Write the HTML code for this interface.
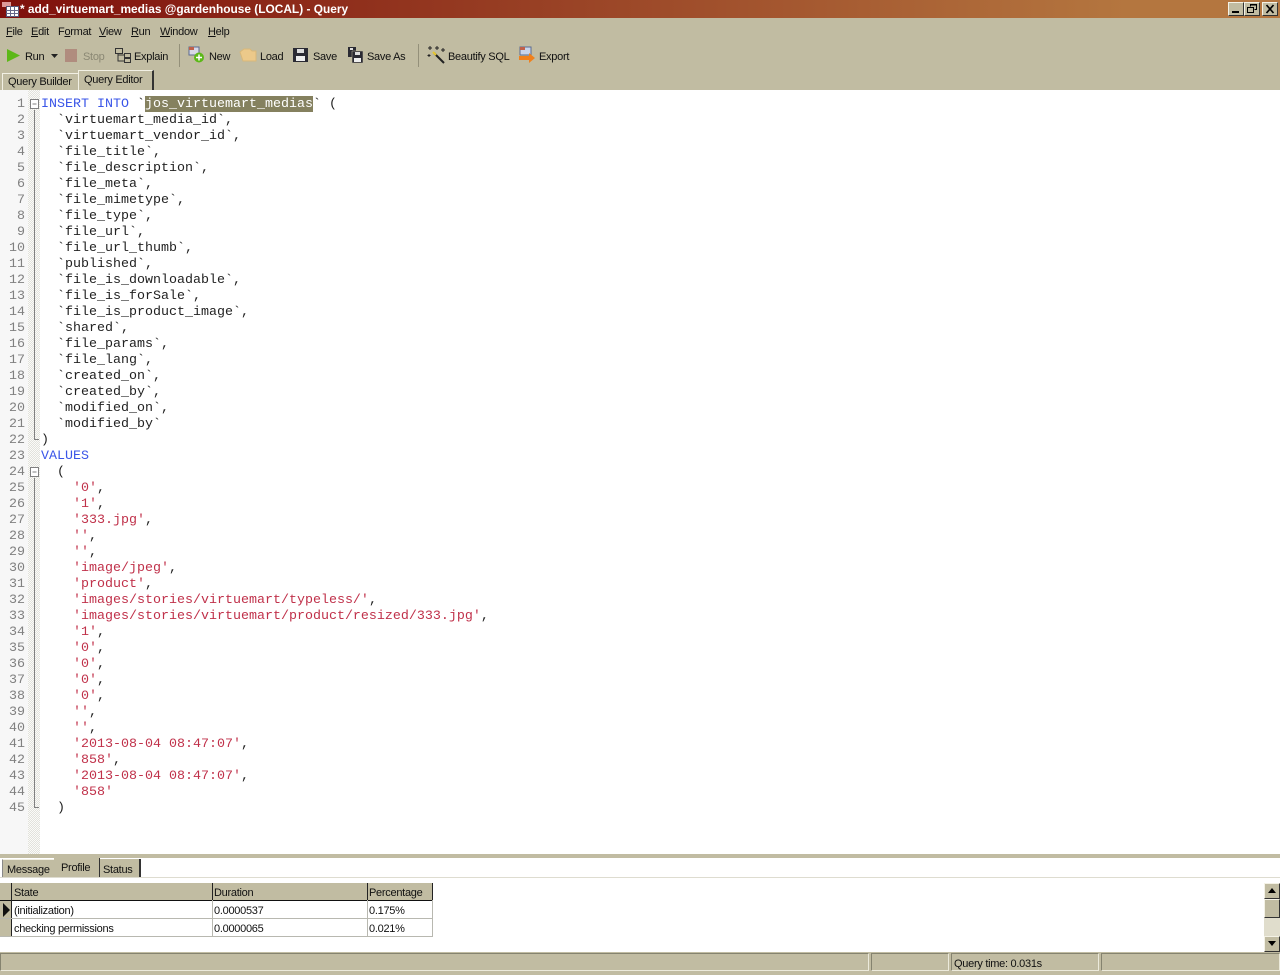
<!DOCTYPE html>
<html><head><meta charset="utf-8"><style>
html,body{margin:0;padding:0;width:1280px;height:975px;overflow:hidden;background:#c1bca2}
.a{position:absolute}
.t{position:absolute;font:11px/14px "Liberation Sans",sans-serif;letter-spacing:-.28px;color:#111;white-space:nowrap}
.c{position:absolute;left:0;white-space:pre;font:13.33px/16px "Liberation Mono",monospace;color:#222}
.n{position:absolute;width:25px;text-align:right;font:13.33px/16px "Liberation Mono",monospace;color:#808080;left:0}
.k{color:#3a55e8}.r{color:#c0314a}
.btn{position:absolute;top:2px;width:16px;height:14px;background:#c1bca2;border:1px solid;border-color:#f4f2e6 #333 #333 #f4f2e6;box-sizing:border-box}
.cell{position:absolute;font:11px/17px "Liberation Sans",sans-serif;letter-spacing:-.28px;color:#111;white-space:nowrap;box-sizing:border-box;padding-left:2px}
</style></head><body>
<div class="a" style="left:0;top:0;width:1280px;height:18px;background:linear-gradient(90deg,#7f0f0c,#b4763f 88%,#b4763f)"></div>
<svg class="a" style="left:2px;top:2px" width="17" height="15"><rect x="0" y="0" width="9" height="5" fill="#d99"/><rect x="4.500" y="4.500" width="12" height="10" fill="#fff" stroke="#557" /><path d="M4 8.500H17M4 11.500H17M8.500 4V15M12.500 4V15" stroke="#668" fill="none"/></svg>
<div class="t" style="left:20px;top:2px;color:#fff;font-weight:bold;font-size:11.9px;letter-spacing:0">* add_virtuemart_medias @gardenhouse (LOCAL) - Query</div>
<div class="btn" style="left:1228px"><div class="a" style="left:3px;top:8px;width:7px;height:2px;background:#000"></div></div>
<div class="btn" style="left:1244px"><svg class="a" style="left:2px;top:1px" width="11" height="10"><path d="M3.500 2.500V.5H9.500V5.500H7.500M.5 3.500H6.500V8.500H.5Z" fill="none" stroke="#000"/><path d="M3 1H10M0 3.500H7" stroke="#000"/></svg></div>
<div class="btn" style="left:1262px"><svg class="a" style="left:2px;top:1px" width="11" height="10"><path d="M1.500 1L8.500 9M8.500 1L1.500 9" stroke="#000" stroke-width="1.700"/></svg></div>

<div class="t" style="left:6px;top:25px"><u>F</u>ile</div>
<div class="t" style="left:31px;top:25px"><u>E</u>dit</div>
<div class="t" style="left:58px;top:25px">F<u>o</u>rmat</div>
<div class="t" style="left:99px;top:25px"><u>V</u>iew</div>
<div class="t" style="left:131px;top:25px"><u>R</u>un</div>
<div class="t" style="left:160px;top:25px"><u>W</u>indow</div>
<div class="t" style="left:208px;top:25px"><u>H</u>elp</div>

<svg class="a" style="left:0;top:40px" width="600" height="32">
<path d="M7 9L20 15.500L7 22Z" fill="#5cb818"/>
<path d="M51 14H58L54.500 18Z" fill="#222"/>
<rect x="65" y="9" width="12" height="13" fill="#b08c7e"/>
<g fill="none" stroke="#333"><rect x="115.500" y="8.500" width="7" height="5"/><rect x="124.500" y="13.500" width="6" height="4"/><rect x="124.500" y="18.500" width="6" height="4"/><path d="M118 14V21H124M118 15H124"/></g>
<line x1="179.500" y1="4" x2="179.500" y2="27" stroke="#94907a"/>
<rect x="189" y="7" width="10" height="8" fill="#d8d8e8" stroke="#5a6a90"/><rect x="189" y="7" width="5" height="3" fill="#c0604a"/>
<circle cx="199" cy="17.500" r="5" fill="#5cb818"/><path d="M199 14.500V20.500M196 17.500H202" stroke="#fff" stroke-width="1.500"/>
<path d="M240 12L244 9H250L252 11H256V21H243Z" fill="#ecc98a" stroke="#d8b87a"/>
<path d="M293 8H308V22H293Z" fill="#2a2a33"/><rect x="297" y="9" width="7" height="4" fill="#ddd"/><rect x="296" y="16" width="9" height="5" fill="#eee"/>
<path d="M348 7H356V17H348Z" fill="#2a2a33"/><rect x="350" y="8" width="3" height="2" fill="#ddd"/>
<path d="M352 11H363V23H352Z" fill="#2a2a33" stroke="#c1bca2" stroke-width=".5"/><rect x="355" y="12" width="5" height="3" fill="#ddd"/><rect x="354" y="18" width="7" height="4" fill="#eee"/>
<line x1="418.500" y1="4" x2="418.500" y2="27" stroke="#94907a"/>
<path d="M434 13L444 23" stroke="#222" stroke-width="2"/><path d="M433 12L436 15" stroke="#e8c830" stroke-width="2"/>
<path d="M430 6V10M428 8H432M437 6V10M435 8H439M443 8V12M441 10H445M429 14V17M427.500 15.500H430.500" stroke="#222"/>
<rect x="520" y="7" width="11" height="8" fill="#c8d4ea" stroke="#5a6a90"/><rect x="520" y="7" width="5" height="3" fill="#c0604a"/>
<path d="M519 16H529V13L535 18L529 23V20H519Z" fill="#f0801c"/>
</svg>
<div class="t" style="left:25px;top:50px">Run</div>
<div class="t" style="left:83px;top:50px;color:#8b8874">Stop</div>
<div class="t" style="left:134px;top:50px">Explain</div>
<div class="t" style="left:209px;top:50px">New</div>
<div class="t" style="left:260px;top:50px">Load</div>
<div class="t" style="left:313px;top:50px">Save</div>
<div class="t" style="left:367px;top:50px">Save As</div>
<div class="t" style="left:448px;top:50px">Beautify SQL</div>
<div class="t" style="left:539px;top:50px">Export</div>

<!-- query tabs -->
<div class="a" style="left:2px;top:73px;width:76px;height:17px;border-top:1px solid #f2f0e4;border-left:1px solid #f2f0e4;box-sizing:border-box"></div>
<div class="a" style="left:78px;top:70px;width:76px;height:20px;background:#c1bca2;border:1px solid #f2f0e4;border-right:2px solid #333;border-bottom:0;box-sizing:border-box"></div>
<div class="t" style="left:8px;top:75px">Query Builder</div>
<div class="t" style="left:84px;top:73px">Query Editor</div>

<!-- editor -->
<div class="a" style="left:0;top:90px;width:1280px;height:764px;background:#fff;overflow:hidden">
<div class="a" style="left:0;top:0;width:28px;height:764px;background:#f7f7f7"></div>
<div class="a" style="left:28px;top:0;width:12px;height:764px;background:repeating-conic-gradient(#e2e2dc 0 25%,#fbfbf8 0 50%) 0 0/2px 2px"></div>
<div class="a" style="left:145px;top:6px;width:168px;height:16px;background:#85815f"></div>
<svg class="a" style="left:28px;top:0" width="12" height="730" fill="none" stroke="#808080">
<path d="M6.500 20V349.500H11"/><path d="M6.500 388V717.500H11"/>
<rect x="2.500" y="9.500" width="8" height="9" fill="#fff"/><path d="M4.500 14H8.500"/>
<rect x="2.500" y="377.500" width="8" height="9" fill="#fff"/><path d="M4.500 382H8.500"/>
</svg>
<div class="n" style="top:7px">1</div><div class="n" style="top:23px">2</div><div class="n" style="top:39px">3</div><div class="n" style="top:55px">4</div><div class="n" style="top:71px">5</div><div class="n" style="top:87px">6</div><div class="n" style="top:103px">7</div><div class="n" style="top:119px">8</div><div class="n" style="top:135px">9</div><div class="n" style="top:151px">10</div><div class="n" style="top:167px">11</div><div class="n" style="top:183px">12</div><div class="n" style="top:199px">13</div><div class="n" style="top:215px">14</div><div class="n" style="top:231px">15</div><div class="n" style="top:247px">16</div><div class="n" style="top:263px">17</div><div class="n" style="top:279px">18</div><div class="n" style="top:295px">19</div><div class="n" style="top:311px">20</div><div class="n" style="top:327px">21</div><div class="n" style="top:343px">22</div><div class="n" style="top:359px">23</div><div class="n" style="top:375px">24</div><div class="n" style="top:391px">25</div><div class="n" style="top:407px">26</div><div class="n" style="top:423px">27</div><div class="n" style="top:439px">28</div><div class="n" style="top:455px">29</div><div class="n" style="top:471px">30</div><div class="n" style="top:487px">31</div><div class="n" style="top:503px">32</div><div class="n" style="top:519px">33</div><div class="n" style="top:535px">34</div><div class="n" style="top:551px">35</div><div class="n" style="top:567px">36</div><div class="n" style="top:583px">37</div><div class="n" style="top:599px">38</div><div class="n" style="top:615px">39</div><div class="n" style="top:631px">40</div><div class="n" style="top:647px">41</div><div class="n" style="top:663px">42</div><div class="n" style="top:679px">43</div><div class="n" style="top:695px">44</div><div class="n" style="top:711px">45</div>
<div class="a" style="left:41px;top:7px">
<div class="c" style="top:0"><span class="k">INSERT INTO</span> `<span style="color:#fff">jos_virtuemart_medias</span>` (</div>
<div class="c" style="top:16px">  `virtuemart_media_id`,</div>
<div class="c" style="top:32px">  `virtuemart_vendor_id`,</div>
<div class="c" style="top:48px">  `file_title`,</div>
<div class="c" style="top:64px">  `file_description`,</div>
<div class="c" style="top:80px">  `file_meta`,</div>
<div class="c" style="top:96px">  `file_mimetype`,</div>
<div class="c" style="top:112px">  `file_type`,</div>
<div class="c" style="top:128px">  `file_url`,</div>
<div class="c" style="top:144px">  `file_url_thumb`,</div>
<div class="c" style="top:160px">  `published`,</div>
<div class="c" style="top:176px">  `file_is_downloadable`,</div>
<div class="c" style="top:192px">  `file_is_forSale`,</div>
<div class="c" style="top:208px">  `file_is_product_image`,</div>
<div class="c" style="top:224px">  `shared`,</div>
<div class="c" style="top:240px">  `file_params`,</div>
<div class="c" style="top:256px">  `file_lang`,</div>
<div class="c" style="top:272px">  `created_on`,</div>
<div class="c" style="top:288px">  `created_by`,</div>
<div class="c" style="top:304px">  `modified_on`,</div>
<div class="c" style="top:320px">  `modified_by`</div>
<div class="c" style="top:336px">)</div>
<div class="c k" style="top:352px;color:#3a55e8">VALUES</div>
<div class="c" style="top:368px">  (</div>
<div class="c" style="top:384px">    <span class="r">'0'</span>,</div>
<div class="c" style="top:400px">    <span class="r">'1'</span>,</div>
<div class="c" style="top:416px">    <span class="r">'333.jpg'</span>,</div>
<div class="c" style="top:432px">    <span class="r">''</span>,</div>
<div class="c" style="top:448px">    <span class="r">''</span>,</div>
<div class="c" style="top:464px">    <span class="r">'image/jpeg'</span>,</div>
<div class="c" style="top:480px">    <span class="r">'product'</span>,</div>
<div class="c" style="top:496px">    <span class="r">'images/stories/virtuemart/typeless/'</span>,</div>
<div class="c" style="top:512px">    <span class="r">'images/stories/virtuemart/product/resized/333.jpg'</span>,</div>
<div class="c" style="top:528px">    <span class="r">'1'</span>,</div>
<div class="c" style="top:544px">    <span class="r">'0'</span>,</div>
<div class="c" style="top:560px">    <span class="r">'0'</span>,</div>
<div class="c" style="top:576px">    <span class="r">'0'</span>,</div>
<div class="c" style="top:592px">    <span class="r">'0'</span>,</div>
<div class="c" style="top:608px">    <span class="r">''</span>,</div>
<div class="c" style="top:624px">    <span class="r">''</span>,</div>
<div class="c" style="top:640px">    <span class="r">'2013-08-04 08:47:07'</span>,</div>
<div class="c" style="top:656px">    <span class="r">'858'</span>,</div>
<div class="c" style="top:672px">    <span class="r">'2013-08-04 08:47:07'</span>,</div>
<div class="c" style="top:688px">    <span class="r">'858'</span></div>
<div class="c" style="top:704px">  )</div>
</div>
</div>

<!-- lower panel -->
<div class="a" style="left:0;top:854px;width:1280px;height:4px;background:#c1bca2"></div>
<div class="a" style="left:0;top:858px;width:1280px;height:94px;background:#fff"></div>
<div class="a" style="left:0;top:877px;width:1280px;height:1px;background:#dedcd0"></div>
<div class="a" style="left:2px;top:859px;width:52px;height:18px;background:#c1bca2;border-left:1px solid #888;border-top:1px solid #f2f0e4;box-sizing:border-box"></div>
<div class="a" style="left:54px;top:858px;width:46px;height:19px;background:#c1bca2;border-right:1px solid #333;box-sizing:border-box"></div>
<div class="a" style="left:100px;top:859px;width:41px;height:18px;background:#c1bca2;border-right:2px solid #333;box-sizing:border-box"></div>
<div class="t" style="left:7px;top:863px">Message</div>
<div class="t" style="left:61px;top:861px">Profile</div>
<div class="t" style="left:103px;top:863px">Status</div>

<!-- grid -->
<div class="a" style="left:0;top:883px;width:433px;height:17px;background:#c1bca2;border-bottom:1px solid #111"></div>
<div class="a" style="left:0;top:901px;width:12px;height:36px;background:#c1bca2"></div>
<div class="a" style="left:11px;top:883px;width:1px;height:54px;background:#222"></div>
<div class="a" style="left:212px;top:883px;width:1px;height:54px;background:#b8b8b0"></div>
<div class="a" style="left:367px;top:883px;width:1px;height:54px;background:#b8b8b0"></div>
<div class="a" style="left:432px;top:883px;width:1px;height:54px;background:#b8b8b0"></div>
<div class="a" style="left:212px;top:883px;width:1px;height:17px;background:#222"></div>
<div class="a" style="left:367px;top:883px;width:1px;height:17px;background:#222"></div>
<div class="a" style="left:432px;top:883px;width:1px;height:17px;background:#222"></div>
<div class="a" style="left:0;top:918px;width:433px;height:1px;background:#b8b8b0"></div>
<div class="a" style="left:0;top:936px;width:433px;height:1px;background:#b8b8b0"></div>
<svg class="a" style="left:3px;top:903px" width="8" height="14"><path d="M0 0L7 7L0 14Z" fill="#111"/></svg>
<div class="cell" style="left:12px;top:885px">State</div>
<div class="cell" style="left:212px;top:885px">Duration</div>
<div class="cell" style="left:367px;top:885px">Percentage</div>
<div class="cell" style="left:12px;top:903px">(initialization)</div>
<div class="cell" style="left:212px;top:903px">0.0000537</div>
<div class="cell" style="left:367px;top:903px">0.175%</div>
<div class="cell" style="left:12px;top:921px">checking permissions</div>
<div class="cell" style="left:212px;top:921px">0.0000065</div>
<div class="cell" style="left:367px;top:921px">0.021%</div>

<!-- scrollbar -->
<div class="a" style="left:1264px;top:883px;width:16px;height:69px;background:#e0ddcc"></div>
<div class="btn" style="left:1264px;top:883px;height:16px"><svg class="a" style="left:3px;top:4px" width="9" height="6"><path d="M4 0L8 5H0Z" fill="#000"/></svg></div>
<div class="btn" style="left:1264px;top:899px;height:19px"></div>
<div class="btn" style="left:1264px;top:936px;height:16px"><svg class="a" style="left:3px;top:4px" width="9" height="6"><path d="M0 0H8L4 5Z" fill="#000"/></svg></div>

<!-- status bar -->
<div class="a" style="left:0;top:952px;width:1280px;height:23px;background:#c1bca2"></div>
<div class="a" style="left:0;top:953px;width:869px;height:18px;border:1px solid;border-color:#85836f #eceadb #eceadb #85836f;box-sizing:border-box"></div>
<div class="a" style="left:871px;top:953px;width:78px;height:18px;border:1px solid;border-color:#85836f #eceadb #eceadb #85836f;box-sizing:border-box"></div>
<div class="a" style="left:951px;top:953px;width:148px;height:18px;border:1px solid;border-color:#85836f #eceadb #eceadb #85836f;box-sizing:border-box"></div>
<div class="a" style="left:1101px;top:953px;width:179px;height:18px;border:1px solid;border-color:#85836f #eceadb #eceadb #85836f;box-sizing:border-box"></div>
<div class="t" style="left:954px;top:957px">Query time: 0.031s</div>
</body></html>
